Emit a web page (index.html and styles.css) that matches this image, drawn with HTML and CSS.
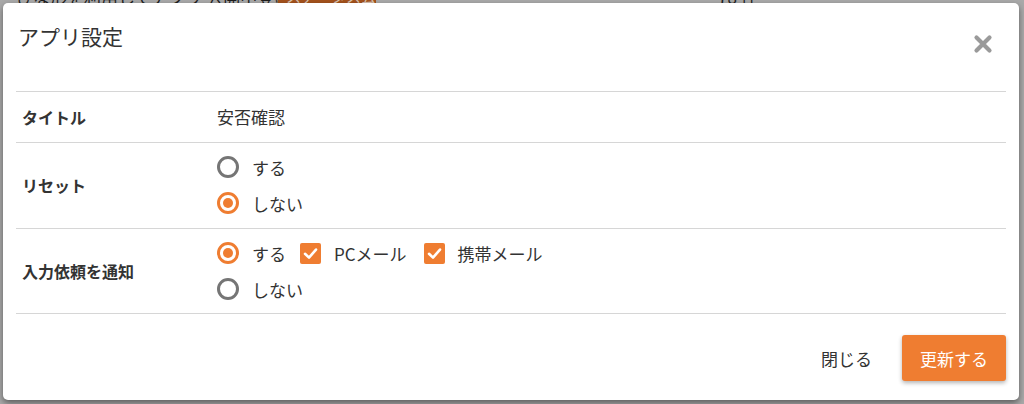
FILE: index.html
```html
<!DOCTYPE html>
<html lang="ja">
<head>
<meta charset="utf-8">
<link rel="stylesheet" href="styles.css">
</head>
<body>
<div class="page">
  <div class="page-line">
    <span class="page-text">ひな形を利用してアプリ 公開中登録</span>
    <span class="page-badge">ステータス公開中</span>
    <span class="page-count">78 件</span>
  </div>
</div>
<div class="modal">
  <div class="modal-header">
    <h2 class="modal-title">アプリ設定</h2>
    <svg class="close" viewBox="0 0 20 20" width="20" height="20"><path d="M3.5 3.5L16.5 16.5M16.5 3.5L3.5 16.5" stroke="#9a9a9a" stroke-width="4.2" stroke-linecap="round"/></svg>
  </div>
  <div class="modal-body">
    <div class="row row-title">
      <div class="label">タイトル</div>
      <div class="value">安否確認</div>
    </div>
    <div class="row row-opts">
      <div class="label">リセット</div>
      <div class="value">
        <div class="opt"><span class="radio"></span><span class="txt">する</span></div>
        <div class="opt"><span class="radio on"></span><span class="txt">しない</span></div>
      </div>
    </div>
    <div class="row row-opts">
      <div class="label">入力依頼を通知</div>
      <div class="value">
        <div class="opt"><span class="radio on"></span><span class="txt">する</span>
          <span class="check"><svg viewBox="0 0 21 21" width="21" height="21"><path d="M5 10.8L9 14.6L16 6.6" fill="none" stroke="#fff" stroke-width="2.6" stroke-linecap="round" stroke-linejoin="round"/></svg></span><span class="txt">PCメール</span>
          <span class="check"><svg viewBox="0 0 21 21" width="21" height="21"><path d="M5 10.8L9 14.6L16 6.6" fill="none" stroke="#fff" stroke-width="2.6" stroke-linecap="round" stroke-linejoin="round"/></svg></span><span class="txt">携帯メール</span>
        </div>
        <div class="opt"><span class="radio"></span><span class="txt">しない</span></div>
      </div>
    </div>
  </div>
  <div class="modal-footer">
    <button class="btn-close">閉じる</button>
    <button class="btn-primary">更新する</button>
  </div>
</div>
</body>
</html>
```

FILE: styles.css
```css
html, body {
  margin: 0;
  padding: 0;
  height: 100%;
  overflow: hidden;
}
body {
  background: #a9a9a9;
  font-family: "Noto Sans CJK JP", "Noto Sans", sans-serif;
  color: #333;
}
.page {
  height: 404px;
}
.page-line {
  display: flex;
  align-items: center;
  margin-top: -14px;
  padding-left: 16px;
  height: 20px;
  font-size: 17px;
  color: #1e1e1e;
}
.page-text {
  width: 262px;
  white-space: nowrap;
  overflow: hidden;
}
.page-badge {
  background: #a4521c;
  color: #d8c2b2;
  padding: 0 8px;
  width: 82px;
  white-space: nowrap;
  overflow: hidden;
  font-size: 15px;
  line-height: 20px;
}
.page-count {
  margin-left: 342px;
}
.modal {
  position: absolute;
  left: 3px;
  top: 3px;
  width: 1016px;
  height: 397px;
  background: #fff;
  border-radius: 5px;
  box-shadow: 0 3px 6px rgba(0, 0, 0, 0.45);
  display: flex;
  flex-direction: column;
}
.modal-header {
  height: 88px;
  box-sizing: border-box;
  padding: 19px 26px 0 15px;
  display: flex;
  justify-content: space-between;
  align-items: flex-start;
}
.modal-title {
  margin: 0;
  font-size: 21px;
  line-height: 28px;
  font-weight: 400;
  color: #333;
}
.close {
  margin-top: 12px;
  display: block;
}
.modal-body {
  margin: 0 13px;
  border-top: 1px solid #d6d6d6;
}
.row {
  display: grid;
  grid-template-columns: 201px 1fr;
  align-items: center;
  border-bottom: 1px solid #d6d6d6;
}
.row-title {
  padding: 12px 0;
  line-height: 26px;
}
.row-opts {
  padding: 6px 0 7px;
}
.row-opts + .row-opts {
  padding: 6px 0 6px;
}
.label {
  padding-left: 6px;
  font-size: 16px;
  font-weight: 700;
  color: #333;
}
.value {
  font-size: 17px;
  color: #333;
}
.opt {
  display: flex;
  align-items: center;
  height: 36px;
}
.txt {
  margin-left: 13px;
  margin-right: 14px;
}
.radio {
  width: 22px;
  height: 22px;
  box-sizing: border-box;
  border: 3px solid #757575;
  border-radius: 50%;
  display: flex;
  align-items: center;
  justify-content: center;
  flex: none;
}
.radio.on {
  border-color: #ef7d31;
}
.radio.on::after {
  content: "";
  width: 10px;
  height: 10px;
  border-radius: 50%;
  background: #ef7d31;
}
.check {
  width: 21px;
  height: 21px;
  border-radius: 2px;
  background: #ef7d31;
  display: block;
  flex: none;
}
.check svg {
  display: block;
}
.txt + .check + .txt + .check {
  margin-left: 3px;
}
.modal-footer {
  display: flex;
  justify-content: flex-end;
  padding: 21px 13px 0;
}
.btn-close {
  height: 46px;
  padding: 0 15px;
  margin-right: 15px;
  border: none;
  background: transparent;
  font-family: inherit;
  font-size: 17px;
  color: #333;
}
.btn-primary {
  height: 46px;
  width: 104px;
  padding: 0;
  border: none;
  border-radius: 3px;
  background: #ef7d31;
  color: #fff;
  font-family: inherit;
  font-size: 17px;
  box-shadow: 0 2px 4px rgba(0, 0, 0, 0.3);
}
```
